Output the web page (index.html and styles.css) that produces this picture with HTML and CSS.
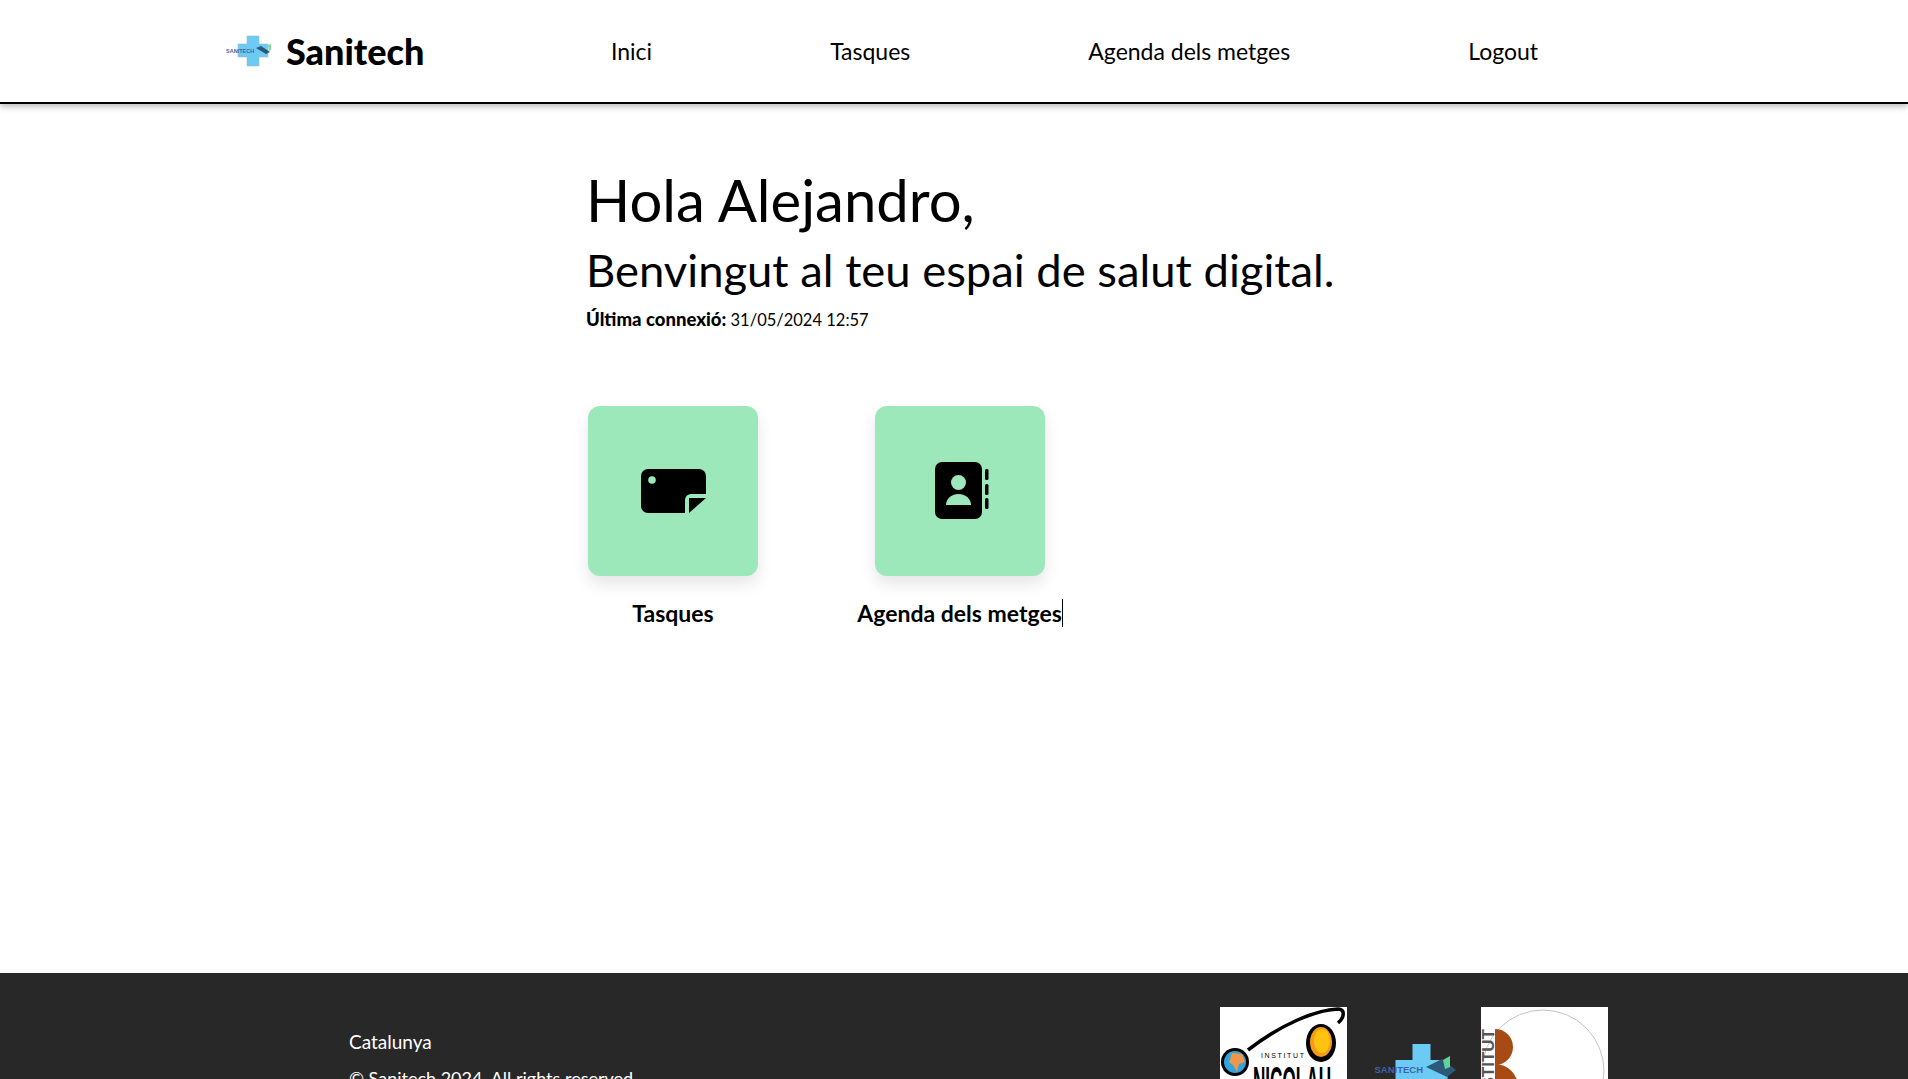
FILE: index.html
```html
<!DOCTYPE html>
<html lang="en">
<head>
    <meta charset="UTF-8">
    <meta name="viewport" content="width=device-width, initial-scale=1.0">
    <title>Sanitech</title>
    <link rel="stylesheet" href="styles.css">
</head>
<body>
    <header class="topbar">
        <div class="brand">
            <svg class="brand-logo" viewBox="0 0 46 32">
                <path d="M21 1h12v8h9v13H33v9H21v-9h-9V9h9z" fill="#6ccbf4" stroke="#a9b9c2" stroke-width="0.6"/>
                <text x="0" y="17.500" class="logo-mini">SANITECH</text>
                <path d="M30 13l5-2 9 6-4 2z" fill="#2b5a78"/>
                <path d="M42 10l3-1v6l-2 1z" fill="#7ed9a8"/>
            </svg>
            <span class="brand-name">Sanitech</span>
        </div>
        <nav class="nav">
            <a href="#">Inici</a>
            <a href="#">Tasques</a>
            <a href="#">Agenda dels metges</a>
            <a href="#">Logout</a>
        </nav>
    </header>

    <main class="content">
        <h1>Hola Alejandro,</h1>
        <h2>Benvingut al teu espai de salut digital.</h2>
        <p class="last-login"><strong>Última connexió:</strong> 31/05/2024 12:57</p>

        <div class="shortcuts">
            <a class="shortcut" href="#">
                <div class="tile">
                    <svg class="icon-note" viewBox="0 0 65 44">
                        <path d="M7 0h51a7 7 0 0 1 7 7v18H50a6 6 0 0 0-6 6v13H7a7 7 0 0 1-7-7V7a7 7 0 0 1 7-7z"/>
                        <path d="M48 29h17L48 44z"/>
                        <circle cx="11" cy="11" r="3.800" fill="#9ce8ba"/>
                    </svg>
                </div>
                <span class="tile-label">Tasques</span>
            </a>
            <a class="shortcut" href="#">
                <div class="tile">
                    <svg class="icon-book" viewBox="0 0 54 58">
                        <rect x="0" y="0" width="47" height="57" rx="7"/>
                        <circle cx="23.500" cy="20.500" r="7.500" fill="#9ce8ba"/>
                        <path d="M11 43c0-6 5-11 12.500-11S36 37 36 43z" fill="#9ce8ba"/>
                        <rect x="50" y="7" width="3.500" height="11" rx="1.500"/>
                        <rect x="50" y="22" width="3.500" height="11" rx="1.500"/>
                        <rect x="50" y="36" width="3.500" height="11" rx="1.500"/>
                    </svg>
                </div>
                <span class="tile-label caret">Agenda dels metges</span>
            </a>
        </div>
    </main>

    <footer class="footer">
        <div class="footer-text">
            <p>Catalunya</p>
            <p class="copyright">© Sanitech 2024. All rights reserved.</p>
        </div>
        <div class="footer-logos">
            <svg class="partner" viewBox="0 0 127 127">
                <rect width="127" height="127" fill="#fff"/>
                <path d="M28 43C60 18 95 3 118 2c7 0 7 8 0 14" fill="none" stroke="#000" stroke-width="3.500"/>
                <ellipse cx="101" cy="36" rx="15" ry="19" fill="#000"/>
                <ellipse cx="101" cy="35" rx="11" ry="15" fill="#f59a1d"/>
                <ellipse cx="102" cy="34" rx="8" ry="12" fill="#ffc20e"/>
                <circle cx="15" cy="55" r="14" fill="#000"/>
                <circle cx="15" cy="55" r="11" fill="#2fa4dd"/>
                <path d="M12 46l10 1 3 8-6 2-2 8-4-7-4-3z" fill="#f0954a"/>
                <text x="41" y="51" class="partner-small" textLength="43">INSTITUT</text>
                <text x="33" y="89" class="partner-big" textLength="78" lengthAdjust="spacingAndGlyphs">NICOLAU</text>
            </svg>
            <svg class="partner" viewBox="0 0 127 127">
                <path d="M61.500 37h18v16h17v74h-52V53h17z" fill="#6ccbf4"/>
                <text x="23.500" y="66" class="logo-san">SANITECH</text>
                <path d="M75 60l16-8 14 11-9 7z" fill="#2b5a78"/>
                <path d="M92 53l7-4v11l-5 2z" fill="#5fd49a"/>
            </svg>
            <svg class="partner" viewBox="0 0 127 127">
                <rect width="127" height="127" fill="#fff"/>
                <circle cx="62" cy="64" r="61" fill="none" stroke="#c4c4c4" stroke-width="1"/>
                <path d="M14 22a18 18 0 0 1 0 36z" fill="#a84a14"/>
                <path d="M14 57a23 23 0 0 1 0 46z" fill="#a84a14"/>
                <text class="partner-side" transform="translate(13 22) rotate(-90)">INSTITUT</text>
            </svg>
        </div>
    </footer>
</body>
</html>
```

FILE: styles.css
```css
/* General Styling */
html, body {
    margin: 0;
    height: 100%;
}
body {
    font-family: "Lato", "Noto Sans", sans-serif;
    color: #000;
    background: #fff;
    display: flex;
    flex-direction: column;
    height: 1079px;
    overflow: hidden;
}
a {
    color: inherit;
    text-decoration: none;
}

/* Top bar */
.topbar {
    display: flex;
    align-items: center;
    box-sizing: border-box;
    height: 104px;
    padding: 0 0 1px 226px;
    border-bottom: 2px solid #000;
    box-shadow: 0 3px 6px rgba(0, 0, 0, 0.25);
    flex-shrink: 0;
}
.brand {
    display: flex;
    align-items: center;
    gap: 14px;
    width: 385px;
}
.brand-logo {
    width: 46px;
    height: 32px;
}
.logo-mini {
    font-family: "Liberation Sans", sans-serif;
    font-size: 5.500px;
    font-weight: bold;
    fill: #3f63a8;
}
.brand-name {
    font-size: 36px;
    font-weight: 900;
}
.nav {
    display: flex;
    gap: 178px;
    font-size: 23px;
}

/* Main */
.content {
    flex: 1;
    padding: 62px 0 0 586px;
}
h1 {
    font-size: 58px;
    font-weight: 400;
    line-height: 68px;
    margin: 0;
}
h2 {
    font-size: 45.400px;
    font-weight: 400;
    line-height: 58px;
    margin: 7px 0 0;
}
.last-login {
    font-size: 16.500px;
    line-height: 24px;
    margin: 8px 0 0;
}
.last-login strong {
    font-size: 18.500px;
    font-weight: 900;
}

/* Tiles */
.shortcuts {
    display: flex;
    margin-top: 74px;
    margin-left: -15px;
}
.shortcut {
    display: flex;
    flex-direction: column;
    align-items: center;
    width: 204px;
    margin-right: 83px;
}
.tile {
    width: 170px;
    height: 170px;
    background: #9ce8ba;
    border-radius: 12px;
    box-shadow: 0 8px 16px rgba(0, 0, 0, 0.1);
    display: flex;
    align-items: center;
    justify-content: center;
}
.icon-note {
    width: 65px;
    height: 44px;
}
.icon-book {
    width: 54px;
    height: 58px;
    margin-left: 4px;
}
.tile-label {
    font-size: 23px;
    font-weight: 700;
    line-height: 28px;
    margin-top: 23px;
    white-space: nowrap;
}
.caret {
    border-right: 1px solid #000;
}

/* Footer */
.footer {
    height: 106px;
    flex-shrink: 0;
    background: #282828;
    color: #fff;
    display: flex;
    padding-left: 349px;
    overflow: hidden;
}
.footer-text {
    width: 871px;
    padding-top: 57px;
    font-size: 19px;
    line-height: 24px;
}
.footer-text p {
    margin: 0 0 12px;
}
.footer-text .copyright {
    font-size: 18px;
}
.footer-logos {
    display: flex;
    gap: 3.500px;
    padding-top: 34px;
}
.partner {
    width: 127px;
    height: 127px;
    flex-shrink: 0;
}
.partner-small {
    font-family: "Liberation Sans", sans-serif;
    font-size: 7px;
}
.partner-big {
    font-family: "Liberation Sans", sans-serif;
    font-size: 42px;
    font-weight: bold;
}
.logo-san {
    font-family: "Liberation Sans", sans-serif;
    font-size: 9.500px;
    font-weight: bold;
    fill: #3f63a8;
}
.partner-side {
    font-family: "Liberation Sans", sans-serif;
    font-size: 17px;
    font-weight: bold;
    fill: #555;
    text-anchor: end;
}
```
